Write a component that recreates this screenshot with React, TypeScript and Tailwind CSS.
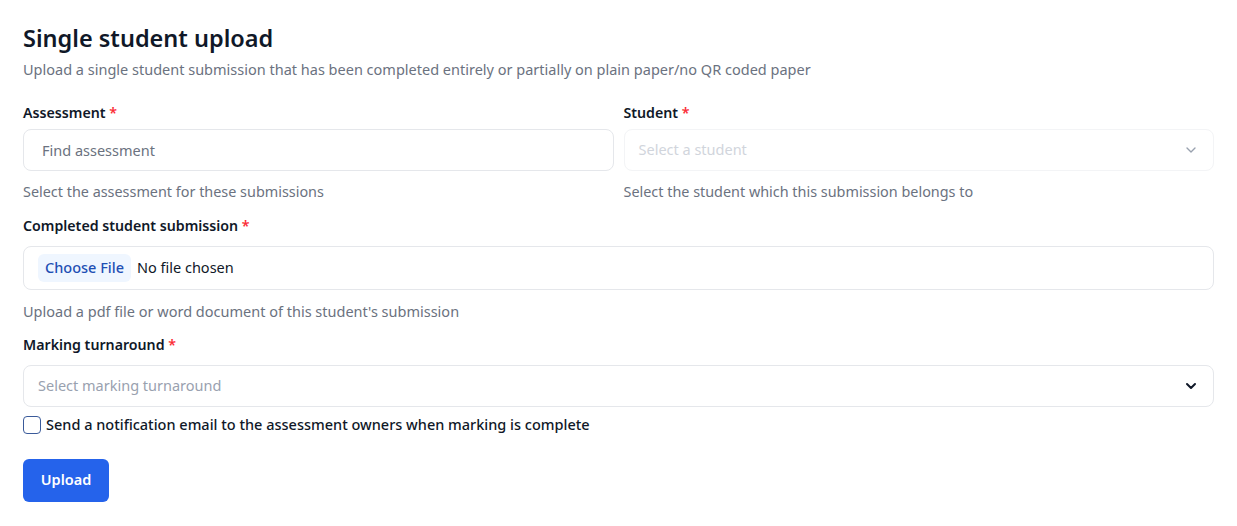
import React, { useState } from 'react';

const font = { fontFamily: '"Noto Sans", "Open Sans", sans-serif' };

const Chevron: React.FC<{ dark?: boolean }> = ({ dark }) => (
  <svg
    width="16"
    height="16"
    viewBox="0 0 24 24"
    fill="none"
    stroke="currentColor"
    strokeWidth={dark ? 3 : 2}
    strokeLinecap="round"
    strokeLinejoin="round"
    className={dark ? 'text-gray-900' : 'text-gray-400'}
  >
    <path d="m6 9 6 6 6-6" />
  </svg>
);

const Label: React.FC<{ children: React.ReactNode }> = ({ children }) => (
  <label className="block text-[14.2px] font-semibold text-gray-900 leading-5">
    {children} <span className="text-red-500">*</span>
  </label>
);

const App: React.FC = () => {
  const [notify, setNotify] = useState(false);

  return (
    <div className="min-h-screen bg-white px-[23px] pt-[22px] pb-6" style={font}>
      <h1 className="text-[23.5px] font-semibold text-gray-900 leading-8">Single student upload</h1>
      <p className="mt-[5px] text-[14.5px] text-[#6b7280] leading-5">
        Upload a single student submission that has been completed entirely or partially on plain paper/no QR coded paper
      </p>

      <div className="mt-[24px] grid grid-cols-2 gap-[10px]">
        <div>
          <Label>Assessment</Label>
          <input
            type="text"
            placeholder="Find assessment"
            className="mt-[6px] w-full h-[42px] rounded-lg border border-gray-200 px-[18px] text-[14.5px] text-gray-900 placeholder:text-[#6b7280] focus:outline-none"
          />
          <p className="mt-[11px] text-[14.4px] text-[#6b7280] leading-5">Select the assessment for these submissions</p>
        </div>
        <div>
          <Label>Student</Label>
          <button
            type="button"
            className="mt-[6px] w-full h-[42px] rounded-lg border border-gray-100 px-[14px] flex items-center justify-between text-[14.5px] text-gray-300"
          >
            <span>Select a student</span>
            <Chevron />
          </button>
          <p className="mt-[11px] text-[14.4px] text-[#6b7280] leading-5">Select the student which this submission belongs to</p>
        </div>
      </div>

      <div className="mt-[14px]">
        <Label>Completed student submission</Label>
        <div className="mt-[10px] h-[44px] rounded-lg border border-gray-200 px-[14px] flex items-center">
          <input
            type="file"
            className="text-[14.5px] text-gray-900 file:mr-[6px] file:rounded-md file:border-0 file:bg-[#eff6ff] file:px-[7px] file:py-[3px] file:text-[14.5px] file:font-medium file:text-[#1e4fb4]"
          />
        </div>
        <p className="mt-[11px] text-[14.5px] text-[#6b7280] leading-5">Upload a pdf file or word document of this student's submission</p>
      </div>

      <div className="mt-[14px]">
        <Label>Marking turnaround</Label>
        <button
          type="button"
          className="mt-[10px] w-full h-[42px] rounded-lg border border-gray-200 px-[14px] flex items-center justify-between text-[14.5px] text-gray-400"
        >
          <span>Select marking turnaround</span>
          <Chevron dark />
        </button>
      </div>

      <label className="mt-[7px] flex items-center gap-[5px] cursor-pointer">
        <input
          type="checkbox"
          checked={notify}
          onChange={(e) => setNotify(e.target.checked)}
          className="appearance-none w-[18px] h-[18px] rounded border-[1.5px] border-[#3a5a9a] checked:bg-blue-600"
        />
        <span className="text-[14.5px] font-medium text-gray-900">
          Send a notification email to the assessment owners when marking is complete
        </span>
      </label>

      <button
        type="button"
        className="mt-[23px] h-[43px] w-[86px] rounded-md bg-[#2563eb] text-white text-[14.5px] font-semibold"
      >
        Upload
      </button>
    </div>
  );
};

export default App;
